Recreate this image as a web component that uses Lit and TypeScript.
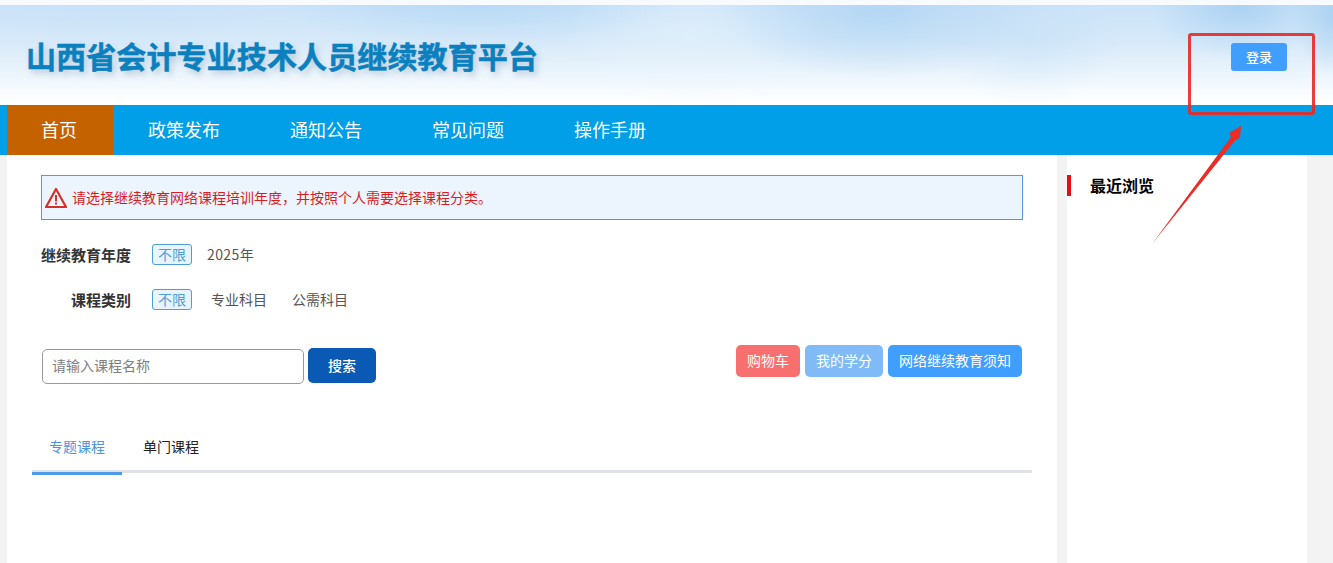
import { LitElement, html, css } from "lit";
import { customElement } from "lit/decorators.js";

const NAV = ["首页", "政策发布", "通知公告", "常见问题", "操作手册"];

@customElement("app-root")
export class AppRoot extends LitElement {
  static styles = css`
    :host {
      display: block;
      position: relative;
      height: 563px;
      overflow: hidden;
      background: #f3f3f3;
      font-family: "Noto Sans CJK SC", "Liberation Sans", sans-serif;
      font-size: 14px;
      color: #333;
    }
    .top-strip { height: 5px; background: #f8fbfd; }
    .header {
      height: 100px;
      display: flex;
      align-items: center;
      justify-content: space-between;
      padding: 0 46px 0 27px;
      box-sizing: border-box;
      background:
        radial-gradient(ellipse 90px 55px at 1240px 0px, rgba(150,198,238,.6), transparent),
        radial-gradient(ellipse 40px 60px at 1333px 10px, rgba(150,198,238,.6), transparent),
        radial-gradient(ellipse 160px 70px at 880px 5px, rgba(160,204,240,.55), transparent),
        radial-gradient(ellipse 90px 60px at 1030px 40px, rgba(175,212,243,.25), transparent),
        radial-gradient(ellipse 200px 40px at 480px 0px, rgba(165,208,242,.5), transparent),
        radial-gradient(ellipse 150px 40px at 120px 0px, rgba(195,222,246,.4), transparent),
        radial-gradient(ellipse 130px 70px at 690px 30px, rgba(232,243,252,.5), transparent),
        linear-gradient(180deg, #cbe3f8 0%, #d6e9f9 35%, #e7f2fb 62%, #f7fbfe 85%, #ffffff 100%);
    }
    .title {
      font-size: 30px;
      font-weight: 700;
      line-height: 40px;
      margin-left: -1px;
      letter-spacing: .12px;
      color: #0a80bf;
      -webkit-text-stroke: 0.5px #0a80bf;
      text-shadow: 3px 4px 6px rgba(70, 110, 150, .3);
    }
    .login {
      width: 56px;
      height: 28px;
      border: 0;
      padding: 0 0 2px;
      margin-top: 4px;
      border-radius: 3px;
      background: #409eff;
      color: #fff;
      font: 500 13px "Noto Sans CJK SC", sans-serif;
    }
    .nav {
      height: 50px;
      background: #009fe8;
      padding-left: 7px;
      display: flex;
    }
    .nav a {
      padding: 0 35px;
      line-height: 48px;
      font-size: 18px;
      color: #fff;
    }
    .nav a.active { background: #c46200; padding: 0 35px 0 34px; width: 37px; }
    .body {
      display: flex;
      align-items: stretch;
      height: 408px;
      padding-left: 7px;
      gap: 10px;
    }
    .main {
      width: 1050px;
      background: #fff;
      box-sizing: border-box;
      padding: 20px 25px 0 34px;
    }
    .alert {
      height: 45px;
      box-sizing: border-box;
      width: 982px;
      border: 1px solid #4f9dd6;
      background: #ecf4fe;
      display: flex;
      align-items: center;
      padding: 0 0 2px 3px;
      gap: 5px;
      color: #d81e1e;
      font-size: 14px;
    }
    .alert svg { flex: none; margin-top: 2px; }
    .filter {
      display: flex;
      align-items: center;
      height: 21px;
      margin-top: 24px;
    }
    .filter + .filter { margin-top: 24px; }
    .filter .label {
      width: 90px;
      text-align: right;
      font-size: 15px;
      font-weight: 700;
      color: #333;
      margin-right: 21px;
      line-height: 19px;
      padding-bottom: 1px;
    }
    .tag {
      box-sizing: border-box;
      width: 40px;
      height: 21px;
      line-height: 18px;
      text-align: center;
      border: 1px solid #4f9dd6;
      background: #e9f5fe;
      border-radius: 3px;
      color: #4f9dd6;
      font-size: 14px;
    }
    .opt { color: #555; font-size: 14px; padding-bottom: 2px; }
    .opt.year { margin-left: 15px; letter-spacing: .4px; }
    .opt.first { margin-left: 19px; }
    .opt.next { margin-left: 25px; }
    .tools {
      display: flex;
      justify-content: space-between;
      align-items: flex-start;
      width: 981px;
      margin-top: 35px;
      padding-left: 1px;
      box-sizing: border-box;
    }
    .search { display: flex; gap: 4px; align-items: flex-start; padding-top: 3px; }
    .input {
      width: 262px;
      height: 35px;
      box-sizing: border-box;
      margin-top: 1px;
      border: 1px solid #999;
      border-radius: 5px;
      padding-left: 9px;
      line-height: 31px;
      color: #808080;
      font-size: 14px;
      background: #fff;
    }
    .go {
      width: 68px;
      height: 35px;
      border: 0;
      padding: 0 0 2px;
      border-radius: 5px;
      background: #0a5ab5;
      color: #fff;
      font: 500 14px "Noto Sans CJK SC", sans-serif;
    }
    .actions { display: flex; gap: 5px; }
    .actions button {
      height: 32px;
      border: 0;
      border-radius: 5px;
      padding: 0 0 2px;
      color: #fff;
      font: 400 14px "Noto Sans CJK SC", sans-serif;
    }
    .red { background: #f7706f; width: 64px; }
    .light { background: #80bbf8; width: 78px; }
    .blue { background: #409eff; width: 134px; }
    .tabs {
      display: flex;
      margin: 40px 0 0 -9px;
      width: 1000px;
      height: 49px;
      box-sizing: border-box;
      border-bottom: 3px solid #dfe1e8;
    }
    .tab {
      width: 90px;
      text-align: center;
      line-height: 44px;
      font-size: 14px;
      color: #222;
    }
    .tab + .tab { width: 78px; margin-left: 5px; text-align: left; padding-left: 16px; }
    .tab.active {
      color: #4c95de;
      box-sizing: border-box;
      height: 51px;
      border-bottom: 3px solid #4c9be8;
    }
    .side {
      width: 240px;
      background: #fff;
      padding-top: 20px;
      box-sizing: border-box;
    }
    .side h3 {
      margin: 0;
      height: 21px;
      line-height: 21px;
      font-size: 16px;
      font-weight: 700;
      color: #000;
      border-left: 4px solid #e60f0f;
      padding-left: 19px;
    }
    .mark-box {
      position: absolute;
      left: 1188px;
      top: 33px;
      width: 127px;
      height: 82px;
      box-sizing: border-box;
      border: 3px solid rgba(233, 40, 35, .9);
      border-radius: 3px;
    }
    .mark-arrow { position: absolute; left: 1150px; top: 120px; }
  `;

  render() {
    return html`
      <div class="top-strip"></div>
      <header class="header">
        <div class="title">山西省会计专业技术人员继续教育平台</div>
        <button class="login">登录</button>
      </header>
      <nav class="nav">
        ${NAV.map((n, i) => html`<a class=${i === 0 ? "active" : ""}>${n}</a>`)}
      </nav>
      <div class="body">
        <main class="main">
          <div class="alert">
            <svg width="22" height="22" viewBox="0 0 22 22">
              <path d="M11 2 L21 20 H1 Z" fill="none" stroke="#d6302a" stroke-width="2.2" stroke-linejoin="round"/>
              <rect x="10" y="8" width="2" height="6.5" fill="#d6302a"/>
              <rect x="10" y="15.5" width="2" height="2" fill="#d6302a"/>
            </svg>
            <span>请选择继续教育网络课程培训年度，并按照个人需要选择课程分类。</span>
          </div>
          <div class="filter">
            <div class="label">继续教育年度</div>
            <div class="tag">不限</div>
            <div class="opt year">2025年</div>
          </div>
          <div class="filter">
            <div class="label">课程类别</div>
            <div class="tag">不限</div>
            <div class="opt first">专业科目</div>
            <div class="opt next">公需科目</div>
          </div>
          <div class="tools">
            <div class="search">
              <div class="input">请输入课程名称</div>
              <button class="go">搜索</button>
            </div>
            <div class="actions">
              <button class="red">购物车</button>
              <button class="light">我的学分</button>
              <button class="blue">网络继续教育须知</button>
            </div>
          </div>
          <div class="tabs">
            <div class="tab active">专题课程</div>
            <div class="tab">单门课程</div>
          </div>
        </main>
        <aside class="side"><h3>最近浏览</h3></aside>
      </div>
      <div class="mark-box"></div>
      <svg class="mark-arrow" width="100" height="126" viewBox="0 0 100 126">
        <path d="M2 124 L81 17 L79 13 L91 6 L90 18 L85.5 20 Z" fill="#ec2d25" stroke="none"/>
      </svg>
    `;
  }
}
